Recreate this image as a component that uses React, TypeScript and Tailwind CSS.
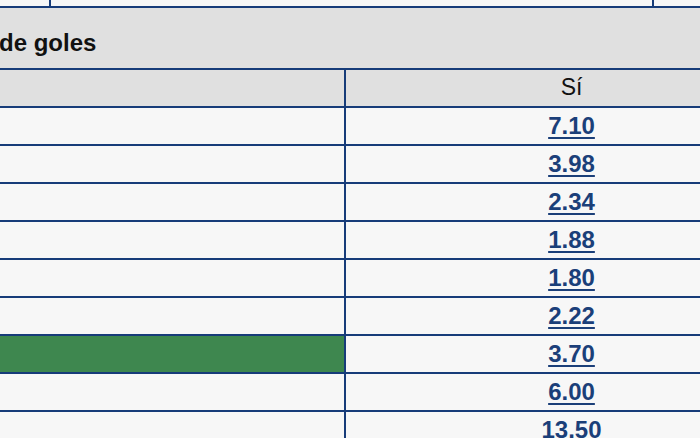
import React from 'react';

const odds = [
  { value: '7.10' },
  { value: '3.98' },
  { value: '2.34' },
  { value: '1.88' },
  { value: '1.80' },
  { value: '2.22' },
  { value: '3.70', highlight: true },
  { value: '6.00' },
  { value: '13.50' },
];

const App: React.FC = () => {
  return (
    <div className="w-[700px] h-[438px] overflow-hidden bg-[#f7f7f7] font-['Liberation_Sans',Arial,sans-serif]">
      <div className="w-[797px]">
        {/* previous market, cut off at the top */}
        <div className="flex h-[8px] border-b-2 border-[#173c79]">
          <div className="w-[49px]" />
          <div className="w-[605px] border-x-2 border-[#173c79]" />
          <div className="flex-1" />
        </div>

        <div className="h-[62px] bg-[#e0e0e0] border-b-2 border-[#173c79] pt-[22px]">
          <h3 className="-ml-[1px] text-[24px] leading-[26px] font-bold text-[#111]">de goles</h3>
        </div>

        <div className="flex h-[38px] bg-[#e0e0e0] border-b-2 border-[#173c79]">
          <div className="w-[346px] border-r-2 border-[#173c79]" />
          <div className="flex-1 pt-[4px] text-center text-[23px] leading-[26px] text-[#111]">Sí</div>
        </div>

        {odds.map((o) => (
          <div key={o.value} className="flex h-[38px] border-b-2 border-[#173c79]">
            <div
              className={
                o.highlight
                  ? 'w-[346px] border-r-2 border-[#173c79] bg-[#3e874f]'
                  : 'w-[346px] border-r-2 border-[#173c79]'
              }
            />
            <div className="flex-1 pt-[5px] text-center">
              <a
                href="#"
                className="text-[24px] leading-[26px] font-bold text-[#1b3f79] underline decoration-2 underline-offset-[3px]"
              >
                {o.value}
              </a>
            </div>
          </div>
        ))}
      </div>
    </div>
  );
};

export default App;
